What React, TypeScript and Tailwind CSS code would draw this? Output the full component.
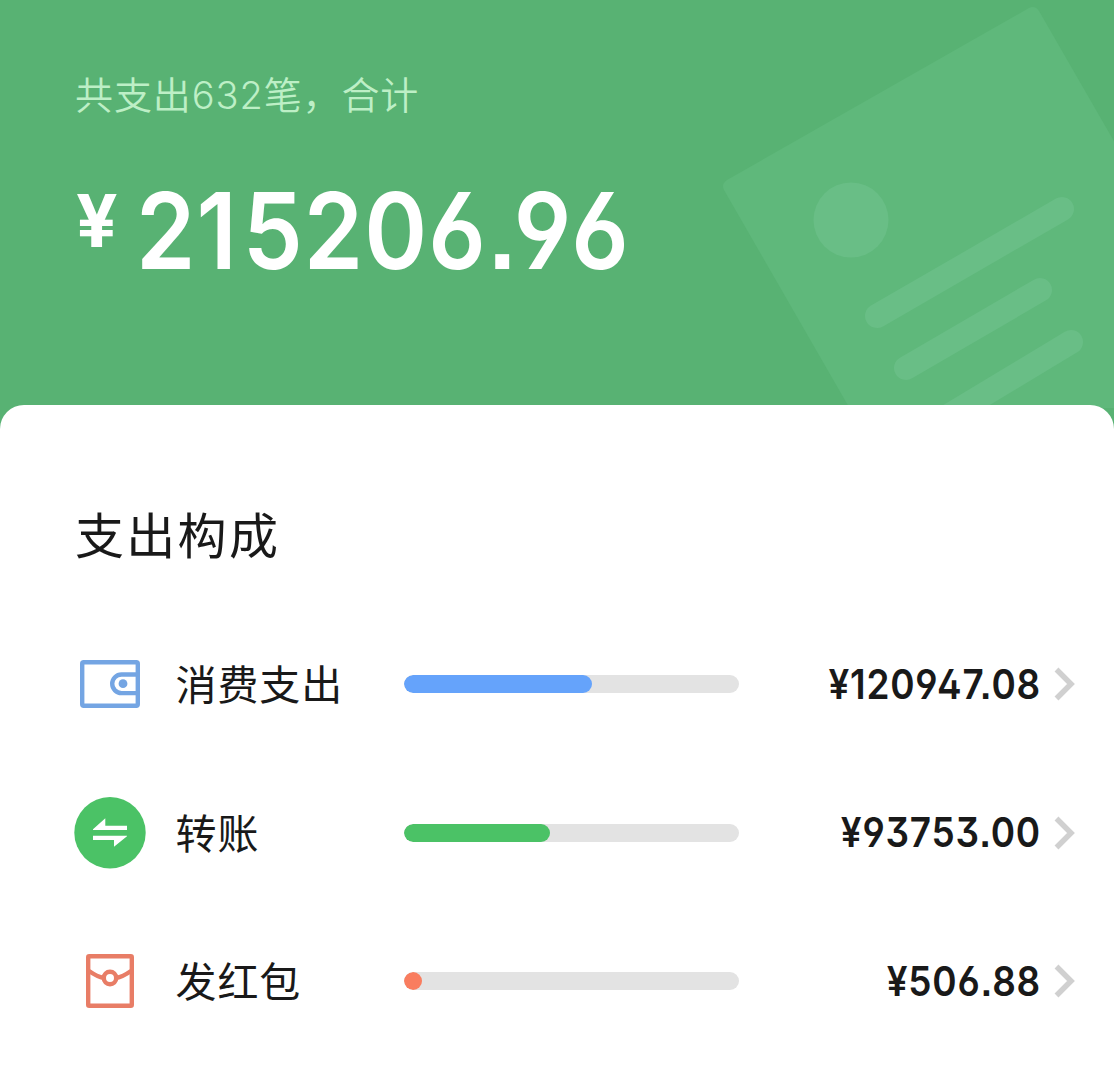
import type { ReactNode } from 'react';

type Item = {
  label: string;
  amount: string;
  percent: number;
  bar: string;
  icon: ReactNode;
};

function WalletIcon() {
  return (
    <svg width="62" height="50" viewBox="0 0 62 50" fill="none" stroke="#74a5e3" strokeWidth="4.4">
      <rect x="3.2" y="3.2" width="55.6" height="43.6" rx="1.5" />
      <path d="M59 15.5H42.5a9.3 9.3 0 0 0 0 18.6H59" />
      <circle cx="44" cy="24.7" r="4.4" fill="#74a5e3" stroke="none" />
    </svg>
  );
}

function TransferIcon() {
  return (
    <svg width="72" height="72" viewBox="0 0 72 72">
      <circle cx="36" cy="35.7" r="35.7" fill="#4bc266" />
      <path d="M19 32.2 31.3 21.3V28.7H53V33H19ZM53 39.2 40 49.8V43H19V38.7H53Z" fill="#fff" />
    </svg>
  );
}

function RedPacketIcon() {
  return (
    <svg width="50" height="54" viewBox="0 0 50 54" fill="none" stroke="#e87d66" strokeWidth="4.4">
      <rect x="3.2" y="2.2" width="43.6" height="49.6" rx="1" />
      <path d="M4 17C9 20.5 13.5 23 19 24M46 17C41 20.5 36.5 23 31 24" />
      <circle cx="25" cy="24" r="6.2" />
    </svg>
  );
}

const items: Item[] = [
  { label: '消费支出', amount: '120947.08', percent: 56.2, bar: 'bg-[#65a3fb]', icon: <WalletIcon /> },
  { label: '转账', amount: '93753.00', percent: 43.6, bar: 'bg-[#4bc266]', icon: <TransferIcon /> },
  { label: '发红包', amount: '506.88', percent: 5.4, bar: 'bg-[#f97d5f]', icon: <RedPacketIcon /> }
];

function BillArt() {
  return (
    <svg className="absolute right-0 top-0" width="414" height="408" viewBox="700 0 414 408">
      <path d="M727 180 1029 8Q1035 5 1039 11L1240 360 960 600 724 190Q721 184 727 180Z" fill="#5fb87b" />
      <g fill="none" stroke="#69be86" strokeWidth="24" strokeLinecap="round">
        <circle cx="851" cy="220" r="37.5" fill="#69be86" stroke="none" />
        <path d="M877 316 1062 209M906 368 1040 290M935 424 1071 342" />
      </g>
    </svg>
  );
}

function Row({ item }: { item: Item }) {
  return (
    <li className="flex h-[148.5px] items-center">
      <div className="flex w-[72px] justify-center">{item.icon}</div>
      <span className="ml-[29.5px] w-[228.5px] pb-[3px] text-[41px] leading-none tracking-[0.9px]">{item.label}</span>
      <div className="h-[18px] w-[335px] overflow-hidden rounded-full bg-[#e3e3e3]">
        <div className={`h-full rounded-full ${item.bar}`} style={{ width: `${item.percent}%` }} />
      </div>
      <span className="flex-1 origin-right scale-x-[0.9] whitespace-nowrap text-right font-['Inter','Noto_Sans_CJK_SC',sans-serif] text-[41px] leading-none font-[570] tracking-[0.9px] [font-feature-settings:'ss01','cv09','ss07']">
        ¥{item.amount}
      </span>
      <svg className="ml-[13px]" width="22" height="34" viewBox="0 0 22 34" fill="none" stroke="#d0d0d0" strokeWidth="5.5">
        <path d="M2.5 2.5 17 17 2.5 31.5" />
      </svg>
    </li>
  );
}

export default function App() {
  return (
    <div className="h-[1080px] overflow-hidden bg-white font-['Noto_Sans_CJK_SC',sans-serif] text-[#191919]">
      <header className="relative h-[429px] bg-[#58b273] px-[76px] pt-[70px]">
        <BillArt />
        <p className="relative -ml-px text-[38px] leading-[46px] font-[350] tracking-[0.9px] text-[#bdefc6]">
          共支出<span className="font-['Inter',sans-serif] font-[350]">632</span>笔，合计
        </p>
        <div className="relative mt-[60px] flex items-start font-['Inter','Noto_Sans_CJK_SC',sans-serif] text-white">
          <span className="mt-[6px] w-[60px] text-[73px] leading-[73px] font-bold">¥</span>
          <span className="origin-left scale-x-[0.9] text-[106px] leading-[106px] font-[590] tracking-[1.2px] [font-feature-settings:'ss01','cv09','ss07']">
            2<span className="tracking-[6.5px]">1</span>5206.96
          </span>
        </div>
      </header>
      <main className="relative -mt-6 rounded-t-[24px] bg-white pt-[96px] pr-[38px] pl-[74px]">
        <h1 className="ml-px text-[49px] leading-[64px] tracking-[2.3px]">支出构成</h1>
        <ul className="mt-[45px]">
          {items.map((item) => (
            <Row key={item.label} item={item} />
          ))}
        </ul>
      </main>
    </div>
  );
}
